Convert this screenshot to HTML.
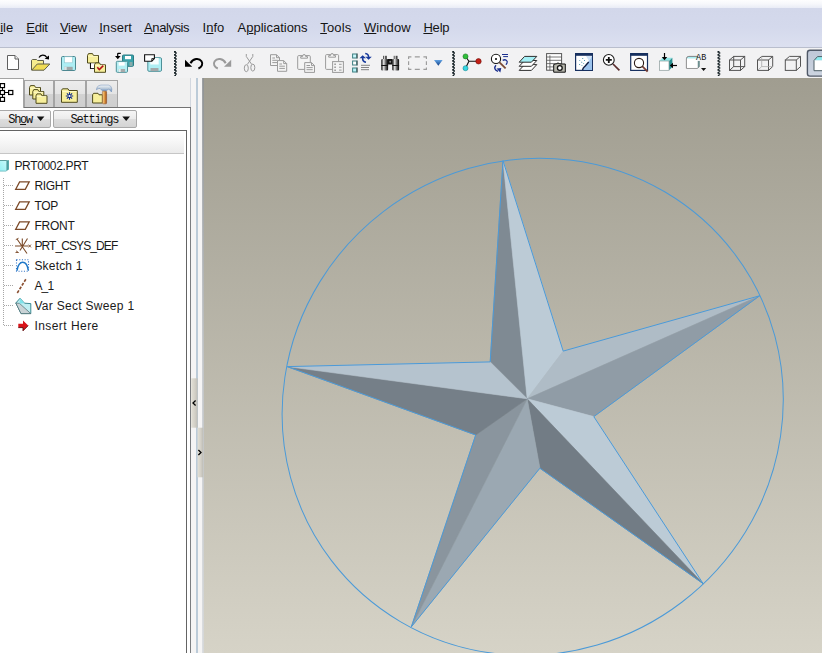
<!DOCTYPE html>
<html>
<head>
<meta charset="utf-8">
<title>PRT0002</title>
<style>
html,body{margin:0;padding:0;}
body{width:822px;height:653px;overflow:hidden;position:relative;background:#f0f0f0;font-family:"Liberation Sans",sans-serif;}
.abs{position:absolute;}
#titlefade{left:0;top:0;width:822px;height:8px;background:linear-gradient(#fdfdfe 0,#f6f7fb 50%,#e9ecf6 100%);}
#menubar{left:0;top:8px;width:822px;height:39px;background:linear-gradient(#d2d7ea 0,#d4d9ec 50%,#dce0f0 100%);}
#menubar span{position:absolute;top:12px;font-size:13px;line-height:16px;color:#151515;white-space:nowrap;}
#menubar u{text-decoration:underline;text-underline-offset:1px;}
#toolbar{left:0;top:46.5px;width:822px;height:32px;background:#f2f2f3;border-top:1px solid #b9becd;box-sizing:border-box;}
#viewport{left:203px;top:78px;width:619px;height:575px;background:linear-gradient(#a09d90 0,#d6d3c7 100%);}
#vpedge{left:202.3px;top:78px;width:1.7px;height:575px;background:linear-gradient(#8d9194 0,#c3c7cb 50%,#d6d9dc 100%);opacity:.85}
#leftpanel{left:0;top:78px;width:190px;height:575px;background:#f0f0f0;}
#sashline{left:196px;top:78px;width:2px;height:575px;background:#bccbd8;}
#sashbg{left:190px;top:78px;width:13px;height:575px;background:#f5f4f4;}
#panelborder{left:190px;top:107px;width:1px;height:546px;background:#7b7d80;}
#pagetop{left:24px;top:107px;width:167px;height:1px;background:#737373;}
#tabpage{left:0;top:107px;width:190px;height:546px;background:#fff;}
.tab{position:absolute;top:80px;height:27px;box-sizing:border-box;border:1px solid #a4a4a4;border-bottom:none;background:linear-gradient(#ececec 0,#e4e4e4 50%,#d2d2d2 52%,#cfcfcf 100%);}
#tab0{left:-1px;top:78px;width:25px;height:30px;background:#fff;border:1px solid #a4a4a4;border-bottom:none;box-sizing:border-box;position:absolute;}
.btn{position:absolute;top:110px;height:18px;box-sizing:border-box;border:1px solid #a9a9a9;border-radius:2px;background:linear-gradient(#f6f6f6 0,#ebebeb 50%,#dddddd 52%,#d4d4d4 100%);font-family:"Liberation Mono",monospace;font-size:12px;line-height:16px;letter-spacing:-1.25px;color:#111;white-space:nowrap;}
#treebox{left:-1px;top:129.5px;width:188px;height:530px;box-sizing:border-box;border:1px solid #646464;background:#fff;}
#treehdr{left:0;top:131px;width:184px;height:23px;background:linear-gradient(#ffffff 0,#f6f6f6 50%,#ebebeb 100%);border-bottom:1px solid #c6c6c6;box-sizing:border-box;}
.ti{position:absolute;font-size:12px;line-height:16px;color:#1a1a1a;white-space:nowrap;}
</style>
</head>
<body>
<div class="abs" id="titlefade"></div>
<div class="abs" id="menubar">
<span style="left:-7.8px;letter-spacing:0px">F<u>i</u>le</span>
<span style="left:26.3px;letter-spacing:-0.25px"><u>E</u>dit</span>
<span style="left:60px;letter-spacing:-0.34px"><u>V</u>iew</span>
<span style="left:99.2px;letter-spacing:0.05px"><u>I</u>nsert</span>
<span style="left:144.1px;letter-spacing:-0.43px"><u>A</u>nalysis</span>
<span style="left:202.5px;letter-spacing:0.05px">I<u>n</u>fo</span>
<span style="left:237.5px;letter-spacing:0px">A<u>p</u>plications</span>
<span style="left:320.2px;letter-spacing:0.2px"><u>T</u>ools</span>
<span style="left:364px;letter-spacing:0.07px"><u>W</u>indow</span>
<span style="left:423.4px;letter-spacing:-0.19px"><u>H</u>elp</span>
</div>
<div class="abs" id="toolbar"></div>
<div class="abs" id="leftpanel"></div>
<div class="abs" id="sashbg"></div>
<div class="abs" id="sashline"></div>
<div class="abs" style="left:190px;top:78px;width:1px;height:29px;background:#d2d7df"></div>
<div class="abs" id="tabpage"></div>
<div class="abs" id="panelborder"></div>
<div class="abs" id="pagetop"></div>
<div class="tab" style="left:24px;width:30px"></div>
<div class="tab" style="left:54px;width:32px"></div>
<div class="tab" style="left:86px;width:32px"></div>
<div id="tab0"></div>
<div class="btn" style="left:-3px;width:54px"><span style="position:absolute;left:10.2px;top:0.5px">Sh<u>o</u>w</span></div>
<div class="btn" style="left:53px;width:84px"><span style="position:absolute;left:16.6px;top:0.5px">Settings</span></div>
<div class="abs" id="treebox"></div>
<div class="abs" id="treehdr"></div>
<div id="tree">
<span class="ti" style="left:14.4px;top:158px;letter-spacing:-0.34px">PRT0002.PRT</span>
<span class="ti" style="left:34.4px;top:178px;letter-spacing:-0.33px">RIGHT</span>
<span class="ti" style="left:34.4px;top:198px;letter-spacing:-0.32px">TOP</span>
<span class="ti" style="left:34.4px;top:218px;letter-spacing:-0.23px">FRONT</span>
<span class="ti" style="left:34.4px;top:238px;letter-spacing:-0.9px">PRT_CSYS_DEF</span>
<span class="ti" style="left:34.4px;top:258px;letter-spacing:0.19px">Sketch 1</span>
<span class="ti" style="left:34.4px;top:278px;letter-spacing:-0.79px">A_1</span>
<span class="ti" style="left:34.4px;top:298px;letter-spacing:0.3px">Var Sect Sweep 1</span>
<span class="ti" style="left:34.4px;top:318px;letter-spacing:0.45px">Insert Here</span>
</div>
<div class="abs" id="viewport"></div>
<div class="abs" id="vpedge"></div>
<svg class="abs" id="scene" style="left:0;top:0" width="822" height="653" viewBox="0 0 822 653">
<!--SCENE-->
<g shape-rendering="geometricPrecision">
<polygon points="527.2,398.8 490.2,361.9 503.0,160.6" fill="#7f8a93" stroke="#7f8a93" stroke-width="0.6"/>
<polygon points="527.2,398.8 563.2,351.1 503.0,160.6" fill="#bccbd6" stroke="#bccbd6" stroke-width="0.6"/>
<polygon points="527.2,398.8 563.2,351.1 759.8,295.7" fill="#afbcc6" stroke="#afbcc6" stroke-width="0.6"/>
<polygon points="527.2,398.8 593.8,416.6 759.8,295.7" fill="#909ca6" stroke="#909ca6" stroke-width="0.6"/>
<polygon points="527.2,398.8 593.8,416.6 703.2,583.7" fill="#bccbd6" stroke="#bccbd6" stroke-width="0.6"/>
<polygon points="527.2,398.8 539.9,468.2 703.2,583.7" fill="#727c85" stroke="#727c85" stroke-width="0.6"/>
<polygon points="527.2,398.8 539.9,468.2 411.3,626.9" fill="#9ba8b2" stroke="#9ba8b2" stroke-width="0.6"/>
<polygon points="527.2,398.8 475.7,435.0 411.3,626.9" fill="#8a959e" stroke="#8a959e" stroke-width="0.6"/>
<polygon points="527.2,398.8 475.7,435.0 287.2,366.6" fill="#757f88" stroke="#757f88" stroke-width="0.6"/>
<polygon points="527.2,398.8 490.2,361.9 287.2,366.6" fill="#b5c3ce" stroke="#b5c3ce" stroke-width="0.6"/>
<polygon points="503.0,160.6 563.2,351.1 759.8,295.7 593.8,416.6 703.2,583.7 539.9,468.2 411.3,626.9 475.7,435.0 287.2,366.6 490.2,361.9" fill="none" stroke="#4b9ad8" stroke-width="1" stroke-linejoin="round"/>
<ellipse cx="532.7" cy="406.8" rx="253.3" ry="245.8" transform="rotate(-37.33 532.7 406.8)" fill="none" stroke="#4b9ad8" stroke-width="1"/>
</g>
<!--/SCENE-->
</svg>
<svg class="abs" id="icons" style="left:0;top:0" width="822" height="653" viewBox="0 0 822 653">
<!--ICONS-->
<defs>
<linearGradient id="gtri" x1="0" y1="0" x2="0" y2="1"><stop offset="0" stop-color="#62a4e6"/><stop offset="1" stop-color="#0e3a80"/></linearGradient>
<linearGradient id="gbin" x1="0" y1="0" x2="1" y2="0"><stop offset="0" stop-color="#000"/><stop offset=".35" stop-color="#e8e8e8"/><stop offset=".6" stop-color="#777"/><stop offset="1" stop-color="#000"/></linearGradient>
<linearGradient id="ghandle" x1="0" y1="0" x2="1" y2="0"><stop offset="0" stop-color="#f6d79a"/><stop offset=".5" stop-color="#e09a45"/><stop offset="1" stop-color="#9a4a18"/></linearGradient>
<linearGradient id="ghead" x1="0" y1="0" x2="0" y2="1"><stop offset="0" stop-color="#f4f6f8"/><stop offset=".5" stop-color="#b8c8d8"/><stop offset="1" stop-color="#4a78b8"/></linearGradient>
<g id="sep"><path d="M0 0.0h1.9v1.8h-1.9zM1 1.2h1.8v1.6h-1.8zM0 3.0h1.9v1.8h-1.9zM1 4.2h1.8v1.6h-1.8zM0 6.0h1.9v1.8h-1.9zM1 7.2h1.8v1.6h-1.8zM0 9.0h1.9v1.8h-1.9zM1 10.2h1.8v1.6h-1.8zM0 12.0h1.9v1.8h-1.9zM1 13.2h1.8v1.6h-1.8zM0 15.0h1.9v1.8h-1.9zM1 16.2h1.8v1.6h-1.8zM0 18.0h1.9v1.8h-1.9zM1 19.2h1.8v1.6h-1.8zM0 21.0h1.9v1.8h-1.9zM1 22.2h1.8v1.6h-1.8zM0.3 24h1.7v.9h-1.7z" fill="#182428"/></g>
<g id="floppy"><rect x="0.5" y="0.5" width="14" height="14" rx="1.2" fill="#adeef4" stroke="#4d8790"/><rect x="3.5" y="0.8" width="8" height="6" fill="#fff" stroke="#8fc7cf" stroke-width=".6"/><rect x="3.2" y="10.8" width="8.5" height="3.2" fill="#9fa7a8"/><rect x="3.2" y="10.8" width="2.5" height="3.2" fill="#d8e4e6"/></g>
<g id="folder"><path d="M0.5 2.5 L1.5 0.6 H5.5 L6.5 2.5 H11.5 V10 H0.5 Z" fill="#f7ef9c" stroke="#4f4a1c" stroke-width="1"/><path d="M1.3 3.3H10.7" stroke="#fffbd0" stroke-width=".8"/></g>
</defs>
<!-- new -->
<path d="M7.5 55.5 H15 L18.5 59 V69.5 H7.5 Z" fill="#fff" stroke="#5f5f5f"/><path d="M15 55.5 V59 H18.5" fill="#eee" stroke="#5f5f5f"/>
<!-- open -->
<path d="M31.5 70 V60.3 L32.5 59.5 H36.5 L37.5 60.5 H43.5 V64" fill="#f6ec8e" stroke="#5f5f4a"/>
<path d="M31.7 70.2 L37.3 64 H49.8 L44 70.2 Z" fill="#f0dc55" stroke="#5f5f4a"/>
<path d="M39 57.6 C40.5 54.6 44.5 54 46.8 57.3" fill="none" stroke="#000" stroke-width="1.2"/><path d="M44.6 58.8 L49 59.6 L49 55.4 Z" fill="#000"/>
<!-- save -->
<use href="#floppy" x="61" y="56"/>
<!-- folder check -->
<use href="#folder" x="87" y="53"/>
<path d="M90.5 63 V68.5 H95" fill="none" stroke="#111" stroke-width="1.1"/>
<rect x="91" y="63.5" width="4" height="4.6" fill="#fff"/>
<use href="#folder" x="94" y="62.3"/>
<path d="M97.3 67.3 L99.3 69.6 L103.3 65.6" fill="none" stroke="#b3121a" stroke-width="1.5"/>
<!-- save copy -->
<g><rect x="122.5" y="55" width="11" height="11.3" rx="1" fill="#3aa3ab" stroke="#2b7c84"/><rect x="125" y="56" width="6" height="3.2" fill="#fff"/><rect x="129.5" y="62" width="3" height="4" fill="#8aa"/></g>
<g><rect x="116.3" y="61.3" width="11.2" height="11" rx="1" fill="#b5eff4" stroke="#4e9098"/><rect x="118.7" y="62.2" width="6" height="3.4" fill="#fff"/><rect x="118.7" y="69" width="6.4" height="3" fill="#a7a9aa"/><rect x="118.7" y="69" width="2" height="3" fill="#e4eeee"/></g>
<path d="M120.8 53.4 H118.2 Q117.7 53.4 117.7 54 V57" fill="none" stroke="#000" stroke-width="1.2"/><path d="M115 56 H120.6 L117.8 59.3 Z" fill="#000"/>
<!-- backup -->
<g><rect x="147.8" y="57.7" width="13.7" height="13.6" rx="1.2" fill="#aeeef3" stroke="#4e9098"/><rect x="150.3" y="58" width="8.4" height="6.5" fill="#fff" opacity=".9"/><rect x="150.5" y="68" width="8" height="3" fill="#a3a8a9"/></g>
<path d="M144.6 54.8 H154.4 V58.6 L151.8 61.2 H144.6 Z" fill="#fff" stroke="#111" stroke-width="1.1"/><path d="M151.8 61.2 V58.6 H154.4" fill="none" stroke="#111" stroke-width=".9"/>
<use href="#sep" x="174" y="51"/>
<!-- undo -->
<path d="M190.5 63.2 C193 58.2 199.2 57.8 201.5 61.2 C203.4 64 201.7 67.3 198.4 68.5" fill="none" stroke="#000" stroke-width="2"/>
<path d="M185 59.8 V66.7 H192.2 Z" fill="#000"/>
<!-- redo -->
<path d="M225.7 63.2 C223.2 58.2 217 57.8 214.7 61.2 C212.8 64 214.5 67.3 217.8 68.5" fill="none" stroke="#9a9a9a" stroke-width="2"/>
<path d="M231.2 59.8 V66.7 H224 Z" fill="#9a9a9a"/>
<!-- cut -->
<g fill="none" stroke="#9b9b9b" stroke-width="1"><path d="M246.3 54 V56.5 L251.8 64.5 M252.8 54 V56.5 L247.3 64.5"/><ellipse cx="246.3" cy="68.2" rx="2" ry="3.5"/><ellipse cx="252.8" cy="67.6" rx="2" ry="3.5"/></g>
<!-- copy -->
<g fill="#f4f4f4" stroke="#9b9b9b" stroke-width="1"><path d="M270.5 54.7 H276.5 L279.5 57.7 V65.5 H270.5 Z"/><path d="M276.5 54.7 V57.7 H279.5" fill="none"/><path d="M272.3 58 H275 M272.3 60.3 H277.7 M272.3 62.6 H277.7" fill="none"/><path d="M277.5 60.6 H283.7 L286.7 63.6 V71.3 H277.5 Z"/><path d="M283.7 60.6 V63.6 H286.7" fill="none"/><path d="M279.3 64 H282 M279.3 66.2 H284.9 M279.3 68.4 H284.9" fill="none"/></g>
<!-- paste -->
<g fill="#f4f4f4" stroke="#9b9b9b" stroke-width="1"><rect x="297.7" y="55.6" width="12.6" height="13.8" rx="1"/><path d="M300.7 58.2 V56.6 H302.5 L303.3 54.6 H304.9 L305.7 56.6 H307.5 V58.2 Z"/><path d="M304.7 62.6 H311.5 L314.5 65.6 V72.4 H304.7 Z"/><path d="M311.5 62.6 V65.6 H314.5" fill="none"/><path d="M306.5 65.5 H310 M306.5 67.6 H312.7 M306.5 69.7 H312.7" fill="none"/></g>
<!-- paste special -->
<g fill="#f4f4f4" stroke="#9b9b9b" stroke-width="1"><rect x="325.6" y="54.6" width="13" height="14.8" rx="1"/><path d="M328.7 57.2 V55.6 H330.5 L331.3 53.6 H332.9 L333.7 55.6 H335.5 V57.2 Z"/><rect x="332.6" y="61.6" width="10.8" height="10.8"/><path d="M339 64.3 H341.6 M339 67.2 H341.6 M339 70.1 H341.6" fill="none"/><path d="M334.3 63.6h1.6v1.5h-1.6zM334.3 66.5h1.6v1.5h-1.6zM334.3 69.4h1.6v1.5h-1.6z" fill="#9b9b9b" stroke="none"/></g>
<!-- regenerate -->
<g stroke="#3c7f82" stroke-width="1"><rect x="352.6" y="54" width="4" height="4" fill="#c9f7fa"/><rect x="352.6" y="61" width="4" height="4" fill="#fff"/><rect x="352.6" y="68" width="4" height="4" fill="#b7f1f5"/></g>
<path d="M357.2 53.6v5M357.2 60.6v5M357.2 67.6v5" stroke="#566" stroke-width="1.2"/>
<path d="M361 65.3H370M361 67.5H369M361 69.7H369" stroke="#777" stroke-width=".9"/>
<path d="M359.5 58.2 L362.7 55.2 L366 58.2 Z" fill="#173a9c"/><path d="M362.7 57.5 C362.4 60 363.4 61.8 366 62.2" fill="none" stroke="#173a9c" stroke-width="1.5"/>
<path d="M365.3 56.8 L368.6 59.8 L371.8 56.8 Z" fill="#173a9c"/><path d="M368.6 57.5 C368.8 55 367.6 53.6 365.2 53.4" fill="none" stroke="#173a9c" stroke-width="1.5"/>
<!-- binoculars -->
<g><rect x="383" y="55.8" width="3.6" height="4" fill="url(#gbin)"/><rect x="393.8" y="55.8" width="3.6" height="4" fill="url(#gbin)"/><rect x="381.3" y="59" width="6.8" height="11.4" rx="1" fill="url(#gbin)"/><rect x="392.3" y="59" width="6.8" height="11.4" rx="1" fill="url(#gbin)"/><rect x="381.3" y="65" width="6.8" height="1" fill="#111"/><rect x="392.3" y="65" width="6.8" height="1" fill="#111"/><path d="M388 59 H392.4 V64.5 H388 Z" fill="#111"/><circle cx="390.2" cy="61.8" r="1" fill="#888"/></g>
<!-- dashed rect -->
<path d="M408.6 59V56.8H411.4M414.8 56.8H419.8M423.4 56.8H426.4V59M426.4 61.2V65M426.4 67.4V69.4H423.4M419.8 69.4H414.8M411.4 69.4H408.6V67.4M408.6 65V61.2" fill="none" stroke="#9c9c9c" stroke-width="1.15"/>
<path d="M434 60 H442.6 L438.3 65.8 Z" fill="url(#gtri)"/>
<use href="#sep" x="452.2" y="51"/>
<!-- graph -->
<path d="M465.5 56.3 L468.9 61.3 L465.5 68.2 M468.9 61.3 H478" fill="none" stroke="#111" stroke-width="1.1"/>
<circle cx="465.5" cy="56.4" r="2.5" fill="#2fbf3a" stroke="#15751c" stroke-width=".6"/><circle cx="478.5" cy="61.3" r="2.7" fill="#c41f16" stroke="#6b0d08" stroke-width=".6"/><circle cx="465.5" cy="68.2" r="2.5" fill="#35d6e3" stroke="#13868f" stroke-width=".6"/>
<!-- spin center -->
<path d="M499.5 62.3 L505.6 68.4" stroke="#7a4a35" stroke-width="1.8"/>
<circle cx="496" cy="58.9" r="4.6" fill="#fff" stroke="#111" stroke-width="1.1"/><circle cx="496" cy="58.9" r="1" fill="#000"/>
<path d="M502 54.5 H508 M503.2 56.6 H508" stroke="#1a2f8f" stroke-width="1"/>
<path d="M502.7 60.3 C505.5 59 508 60.4 507 63 L506 64.8" fill="none" stroke="#1a2f8f" stroke-width="1.3"/>
<path d="M496 65.2 C493.8 67.4 494.6 70.3 498 71.3" fill="none" stroke="#1a2f8f" stroke-width="1.4"/><path d="M496.5 68.6 L501.3 68 L500.3 72.6 Z" fill="#1a2f8f"/>
<!-- layers -->
<g stroke="#2e2e2e" stroke-width="1" stroke-linejoin="round"><path d="M524.6 64.6 H536.8 L531.4 70.4 H519.2 Z" fill="#fff"/><path d="M524.6 60.5 H536.8 L531.4 66.3 H519.2 Z" fill="#fff"/><path d="M524.6 56.4 H536.8 L531.4 62.2 H519.2 Z" fill="#a5f0f6"/></g>
<!-- view mgr -->
<g fill="#fff" stroke="#555" stroke-width="1"><rect x="546.6" y="53.6" width="15" height="16.6"/><path d="M546.6 57H561.6M546.6 60.3H561.6M546.6 63.6H561.6M546.6 66.9H561.6M549.9 55.3V70.2" fill="none" stroke-width=".8"/></g>
<g><path d="M555.5 64 H556.5 L557 63.2 H559 L559.5 64 H565.3 V72.2 H553.7 V64.5Z" fill="#b7b7ad" stroke="#111" stroke-width="1"/><circle cx="559.8" cy="68" r="2.4" fill="#fff" stroke="#111" stroke-width="1.3"/></g>
<!-- repaint -->
<rect x="575.6" y="53.6" width="16.8" height="16.8" fill="#fff" stroke="#17305f" stroke-width="1.2"/><rect x="575.2" y="53.2" width="17.6" height="2.6" fill="#17305f"/>
<path d="M592 56 V70 H583 Z" fill="#9cc3ec"/><path d="M592 56 L586 56 L589 61 Z" fill="#cfe2f6"/>
<path d="M582.5 70 C583 68 584 67.2 585 66.2 L588.7 62" fill="none" stroke="#0e1d40" stroke-width="1.4"/>
<path d="M579.3 60.2h.9v.9h-.9zM581.3 61.8h.9v.9h-.9zM579.2 64h.9v.9h-.9zM581.5 65.2h.9v.9h-.9zM583.2 63.2h.9v.9h-.9zM584 60h.9v.9h-.9zM582.3 58h.9v.9h-.9z" fill="#3f8fa8"/>
<!-- zoom in -->
<path d="M613 64 L619.4 70.4" stroke="#5a2d2d" stroke-width="1.7"/>
<circle cx="608.8" cy="59.9" r="5.4" fill="#fff" stroke="#1a1a1a" stroke-width="1.1"/><path d="M605.8 59.9H611.8M608.8 56.9V62.9" stroke="#111" stroke-width="1.8"/>
<!-- refit -->
<rect x="630.7" y="53.6" width="16.8" height="16.8" fill="#fff" stroke="#17305f" stroke-width="1.2"/><rect x="630.2" y="53.2" width="17.8" height="2.6" fill="#17305f"/>
<path d="M642.4 66.4 L647.6 71.6" stroke="#7a3f35" stroke-width="1.8"/><circle cx="639" cy="63" r="4.6" fill="#fff" stroke="#2a1a14" stroke-width="1.1"/>
<!-- orient -->
<path d="M659.4 61 L662.6 57.8 H672.4 L669 61 Z" fill="#8fe6e6"/><path d="M669 61 L672.4 57.8 V67 L669 70.3 Z" fill="#2a8f8f"/><rect x="659.4" y="61" width="9.6" height="9.3" fill="#fff" stroke="#8a9a9a" stroke-width=".7"/>
<path d="M664.5 53 V58" stroke="#000" stroke-width="1.2"/><path d="M661.8 57 H667.2 L664.5 60.2 Z" fill="#000"/>
<path d="M677 65.5 H672" stroke="#000" stroke-width="1.2"/><path d="M673 62.8 V68.2 L669.8 65.5 Z" fill="#000"/>
<!-- saved view -->
<path d="M686.4 58.6 Q686.4 56.4 688.8 56.4 H698 V58.6 Z" fill="#a9eef2"/><path d="M686.4 68.3 V58.8 Q686.4 56.4 688.8 56.4 H698 M686.4 68.3 H697.6 L699.6 66.3" fill="none" stroke="#777" stroke-width=".9"/><rect x="686.9" y="58.8" width="10.6" height="9.1" fill="#fff"/><path d="M697.8 61 H699.8 V66 L697.8 68 Z" fill="#6d8f8f"/>
<text x="696" y="59.7" font-family="Liberation Mono,monospace" font-size="8.4" fill="#111" textLength="10.4" lengthAdjust="spacing">AB</text>
<path d="M701 68 H706.2 L703.6 70.9 Z" fill="#111"/>
<use href="#sep" x="717.5" y="51"/>
<!-- wireframe -->
<g fill="none" stroke="#555" stroke-width="1"><rect x="729.5" y="60" width="11" height="10.4"/><rect x="733.7" y="56.4" width="11" height="10.2"/><path d="M729.5 60L733.7 56.4M740.5 60L744.7 56.4M729.5 70.4L733.7 66.6M740.5 70.4L744.7 66.6"/></g>
<!-- hidden -->
<g fill="none" stroke="#555" stroke-width="1"><rect x="757.5" y="60" width="11" height="10.4"/><path d="M757.5 60L761.7 56.4H772.7V66.6L768.5 70.4M768.5 60L772.7 56.4"/><path d="M761.7 56.4V66.6H772.7M757.5 70.4L761.7 66.6" stroke="#aaa" stroke-width=".8"/></g>
<!-- no hidden -->
<g fill="none" stroke="#555" stroke-width="1"><rect x="785.3" y="60" width="11" height="10.4"/><path d="M785.3 60L789.5 56.4H800.5V66.6L796.3 70.4M796.3 60L800.5 56.4"/></g>
<!-- shaded pressed -->
<defs><linearGradient id="gpress" x1="0" y1="0" x2="0" y2="1"><stop offset="0" stop-color="#bfc8d8"/><stop offset="1" stop-color="#ccd4e0"/></linearGradient></defs>
<rect x="807.4" y="50.3" width="22" height="25.8" rx="2.6" fill="url(#gpress)" stroke="#505968" stroke-width="1.4"/>
<path d="M814 60.5 L817.5 56.6 H824 V60.5 Z" fill="#8fe9ee"/><rect x="814" y="60.4" width="10" height="10.2" fill="#fff"/><path d="M824 70.7 H814 V60.5 L817.5 56.6 H824" fill="none" stroke="#4e5f66" stroke-width="1"/>
<defs><linearGradient id="gsash" x1="0" y1="0" x2="1" y2="0"><stop offset="0" stop-color="#e3e0d6"/><stop offset=".6" stop-color="#d2cfc6"/><stop offset="1" stop-color="#bdbcb6"/></linearGradient></defs>
<!-- tab0 tree icon -->
<g fill="#fff" stroke="#000" stroke-width="1.2"><path d="M2.5 86V99M4.5 92.5H9" fill="none" stroke-width="1"/><rect x="0.3" y="83.6" width="4.2" height="4"/><rect x="0.3" y="90.5" width="4.2" height="4"/><rect x="8.6" y="90.5" width="4.2" height="4"/><rect x="0.3" y="97.4" width="4.2" height="4"/></g>
<!-- tab1 folders -->
<use href="#folder" x="29" y="85"/><use href="#folder" x="32.3" y="89"/><use href="#folder" x="35.5" y="93.3"/>
<!-- tab2 folder star -->
<path d="M61.5 102.3 V90.3 L62.5 88.8 H68 L69 90.5 H77.3 V102.3 Z" fill="#f7ef9c" stroke="#4f4a1c"/><path d="M62.3 91.5H76.5" stroke="#fffbd0" stroke-width=".8"/>
<g stroke="#0f2a8a" stroke-width="1.1"><path d="M69.5 92.3V99.7M65.8 96H73.2M66.9 93.4L72.1 98.6M72.1 93.4L66.9 98.6"/></g><circle cx="69.5" cy="96" r="1.1" fill="#fff"/>
<!-- tab3 folder hammer -->
<path d="M92.6 103 V94.8 L93.6 93.3 H98 L99 94.8 H102.4 V103 Z" fill="#f7ef9c" stroke="#4f4a1c"/>
<path d="M96.4 89.8 L97 87.3 Q98.6 85.1 101 85.1 H108.3 Q111.4 85.4 111.9 89 L111.4 92 Q110.2 89.5 108 89 L106.7 90.8 H102.3 L100 88.4 Q98 88.4 96.4 89.8 Z" fill="url(#ghead)" stroke="#6f8fb8" stroke-width=".5"/>
<rect x="102.4" y="91.2" width="4.2" height="12.6" rx=".8" fill="url(#ghandle)" stroke="#8a4a1a" stroke-width=".5"/>
<!-- show/settings arrows -->
<path d="M36.8 116.4 H44.4 L40.6 121 Z" fill="#111"/><path d="M122.3 116.4 H130 L126.2 121 Z" fill="#111"/>
<!-- tree dotted lines -->
<g stroke="#a6a6a6" stroke-width="1" stroke-dasharray="1 1" fill="none"><path d="M3.5 178V326"/><path d="M4 185.5H14M4 205.5H14M4 225.5H14M4 245.5H14M4 265.5H14M4 285.5H14M4 305.5H14M4 325.5H14"/></g>
<!-- part icon -->
<defs><linearGradient id="gpart" x1="0" y1="1" x2="1" y2="0"><stop offset="0" stop-color="#8eeef3"/><stop offset="1" stop-color="#c4f8fa"/></linearGradient></defs>
<path d="M-2 161 L0 160 H8.9 L6.2 161 Z" fill="#5d9c9c"/><path d="M6.2 161 L8.9 160 V169.4 L6.2 171.3 Z" fill="#48a0a2"/><rect x="-2" y="161" width="8.2" height="10.3" fill="url(#gpart)"/><path d="M-2 171.1 H6.2" stroke="#5aa5a8" stroke-width=".6"/>
<!-- datum planes -->
<g fill="#fff" stroke="#7b4a28" stroke-width="1.3" stroke-linejoin="miter"><path d="M19.6 181.9 H29.2 L25.3 189.3 H15.7 Z"/><path d="M19.6 201.9 H29.2 L25.3 209.3 H15.7 Z"/><path d="M19.6 221.9 H29.2 L25.3 229.3 H15.7 Z"/></g>
<!-- csys -->
<g stroke="#7b4a28" stroke-width="1.1" fill="none"><path d="M15 246H28.5M17 239L27 253.5M27.5 238.5L20 250.5M22.3 246V238.5"/><path d="M28.5 244.6L31 247.4M31 244.6L28.5 247.4M15.5 252.5H18.5L16 250.8" stroke-width=".9"/><path d="M15.8 239.6L18.6 238.2" stroke-width=".9"/></g>
<!-- sketch -->
<rect x="16.5" y="259.8" width="12" height="11.5" fill="none" stroke="#3b78c6" stroke-width="1.1" stroke-dasharray="1.1 1.6"/>
<path d="M17 270.8 C17.5 265 20.3 262.2 22.6 262.2 C25 262.2 27.6 265 28.3 270.5" fill="none" stroke="#1f78c8" stroke-width="1.5"/>
<!-- axis -->
<path d="M17.3 293 L26.6 278" stroke="#8a4f30" stroke-width="1.6" stroke-dasharray="3 1.4"/>
<!-- var sect sweep -->
<path d="M20 298.3 L15.8 303 L21 313.6 H30.8 V303.6 L24.5 303.2 Z" fill="#bfeef2" stroke="#2a7f88" stroke-width=".9" stroke-linejoin="round"/><path d="M15.8 303 L21 313.6 H30.8 L19.5 303.4 Z" fill="#c9d3d6" stroke="#4a6a70" stroke-width=".7" stroke-linejoin="round"/><path d="M20 298.3 L24.5 303.2 L19.5 303.4 Z" fill="#7fe3ea"/>
<!-- insert arrow -->
<path d="M18.3 323.8 H23 V320.5 L28.2 325.6 L23 330.8 V327.6 H18.3 Z" fill="#d8141a"/><path d="M18.3 327.6 H23 V330.8 L28.2 325.6" fill="none" stroke="#5a0a0a" stroke-width=".9"/>
<!-- sash handles -->
<rect x="191.2" y="378.3" width="6.4" height="49.4" fill="url(#gsash)"/><rect x="197.6" y="427.7" width="5.6" height="49.6" fill="url(#gsash)"/>
<path d="M195.6 400.6 L193 403 L195.6 405.4" fill="none" stroke="#000" stroke-width="1.3"/><path d="M198.4 450 L201 452.5 L198.4 455" fill="none" stroke="#000" stroke-width="1.3"/>
<!--/ICONS-->
</svg>
</body>
</html>
